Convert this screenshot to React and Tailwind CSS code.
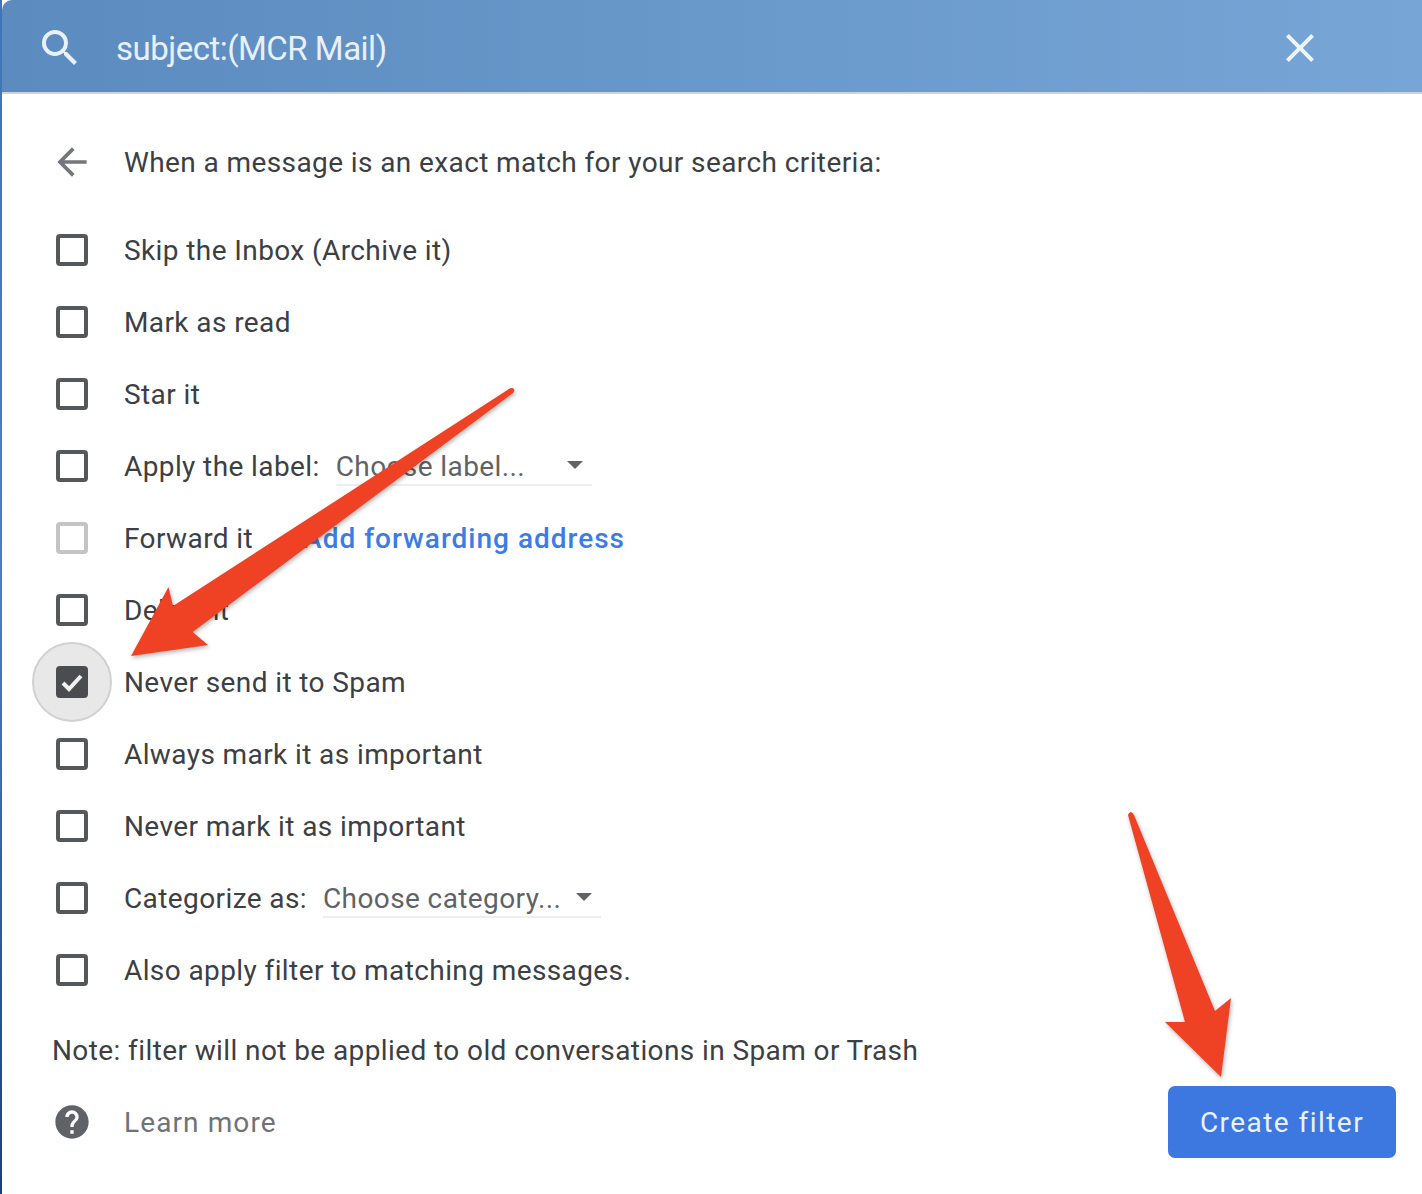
import React from "react";

const rows = [
  { label: "Skip the Inbox (Archive it)" },
  { label: "Mark as read" },
  { label: "Star it" },
  { label: "Apply the label:", select: "label" },
  { label: "Forward it", link: "Add forwarding address", disabled: true },
  { label: "Delete it" },
  { label: "Never send it to Spam", checked: true },
  { label: "Always mark it as important" },
  { label: "Never mark it as important" },
  { label: "Categorize as:", select: "category" },
  { label: "Also apply filter to matching messages." },
];

function Caret() {
  return (
    <svg width="16" height="8" viewBox="0 0 16 8" className="shrink-0">
      <path d="M0 0h16L8 8z" fill="#5f6368" />
    </svg>
  );
}

function CheckBox({ checked, disabled }) {
  if (checked) {
    return (
      <div className="relative h-8 w-8">
        <div className="absolute -left-[24px] -top-[24px] h-[80px] w-[80px] rounded-full border-2 border-[#cfd2d5] bg-[#e8e8e8]" />
        <div className="relative flex h-8 w-8 items-center justify-center rounded-[4px] bg-[#4a4c4f]">
          <svg width="24" height="24" viewBox="0 0 24 24">
            <path d="M3 13l6 6L21 6" fill="none" stroke="#f1f1f1" strokeWidth="4" />
          </svg>
        </div>
      </div>
    );
  }
  return (
    <div
      className={
        disabled
          ? "h-8 w-8 rounded-[4px] border-4 border-[#c4c4c4]"
          : "h-8 w-8 rounded-[4px] border-4 border-[#55585b]"
      }
    />
  );
}

function Row({ row }) {
  return (
    <div className="flex h-[72px] items-center">
      <div className="w-[68px] shrink-0">
        <CheckBox checked={row.checked} disabled={row.disabled} />
      </div>
      <span className="pt-[2px]">{row.label}</span>
      {row.select === "label" && (
        <div className="ml-4 flex h-[40px] w-[256px] items-center border-b-2 border-[#eeeeee] pr-[9px] text-[#5f6368]">
          <span className="flex-1 pt-[4px]">Choose label...</span>
          <Caret />
        </div>
      )}
      {row.select === "category" && (
        <div className="ml-[16px] flex h-[40px] w-[278px] items-center border-b-2 border-[#eeeeee] pr-[9px] text-[#5f6368]">
          <span className="flex-1 pt-[4px]">Choose category...</span>
          <Caret />
        </div>
      )}
      {row.link && (
        <span className="ml-[50px] pt-[2px] font-medium tracking-[1px] text-[#3b7ce6]">{row.link}</span>
      )}
    </div>
  );
}

export default function App() {
  return (
    <div className="relative flex h-[1194px] overflow-hidden bg-white font-['Roboto',sans-serif] text-[28px] tracking-[0.4px] text-[#3c4043]">
      <div className="w-[2px] shrink-0 bg-gradient-to-b from-[#3f74b8] via-[#4a7fc0] to-[#1d3f78]" />
      <div className="flex min-w-0 flex-1 flex-col">
        <div className="flex h-[94px] shrink-0 items-center rounded-tl-[10px] border-b-2 border-[#cfd3d8] bg-gradient-to-r from-[#5b8bbf] to-[#77a5d6] pl-[34px] pr-[98px] pt-1 text-[#e8f0f9]">
          <svg width="48" height="48" viewBox="0 0 24 24" fill="#e8f0f9" className="shrink-0">
            <path d="M15.5 14h-.79l-.28-.27A6.471 6.471 0 0 0 16 9.5 6.5 6.5 0 1 0 9.5 16c1.61 0 3.09-.59 4.23-1.57l.27.28v.79l5 4.99L20.49 19l-4.99-5zm-6 0C7.01 14 5 11.99 5 9.5S7.01 5 9.5 5 14 7.01 14 9.5 11.99 14 9.5 14z" />
          </svg>
          <span className="ml-[32px] flex-1 pt-[2px] text-[33px] tracking-[-0.5px]">subject:(MCR Mail)</span>
          <svg width="48" height="48" viewBox="0 0 24 24" fill="#eef4fb" className="shrink-0">
            <path d="M19 6.41L17.59 5 12 10.59 6.41 5 5 6.41 10.59 12 5 17.59 6.41 19 12 13.41 17.59 19 19 17.59 13.41 12z" />
          </svg>
        </div>

        <div className="flex flex-1 flex-col pl-[54px] pr-[26px] pt-[32px]">
          <div className="mb-4 flex h-[72px] items-center">
            <div className="w-[68px] shrink-0">
              <svg width="44" height="44" viewBox="0 0 24 24" fill="#73777b" className="-ml-[6px]">
                <path d="M20 11H7.83l5.59-5.59L12 4l-8 8 8 8 1.41-1.41L7.83 13H20v-2z" />
              </svg>
            </div>
            <span className="pt-[2px]">When a message is an exact match for your search criteria:</span>
          </div>

          {rows.map((row) => (
            <Row key={row.label} row={row} />
          ))}

          <div className="-ml-1 mt-2 flex h-[72px] items-center pt-[2px]">
            Note: filter will not be applied to old conversations in Spam or Trash
          </div>

          <div className="flex h-[72px] items-center">
            <div className="w-[68px] shrink-0">
              <svg width="40" height="40" viewBox="0 0 24 24" fill="#5f6368" className="-ml-1">
                <path d="M12 2C6.48 2 2 6.48 2 12s4.48 10 10 10 10-4.48 10-10S17.52 2 12 2zm1 17h-2v-2h2v2zm2.07-7.75l-.9.92C13.45 12.9 13 13.5 13 15h-2v-.5c0-1.1.45-2.1 1.17-2.83l1.24-1.26c.37-.36.59-.86.59-1.41 0-1.1-.9-2-2-2s-2 .9-2 2H8c0-2.21 1.79-4 4-4s4 1.79 4 4c0 .88-.36 1.68-.93 2.25z" />
              </svg>
            </div>
            <span className="flex-1 pt-[2px] tracking-[1.1px] text-[#6f7377]">Learn more</span>
            <button className="flex h-[72px] w-[228px] items-center justify-center rounded-[7px] bg-[#3d78e0] pt-[2px] tracking-[1.45px] text-[#eaf1fc]">
              Create filter
            </button>
          </div>
        </div>
      </div>

      {/* annotation arrows on top of the dialog */}
      <svg
        width="1422"
        height="1194"
        viewBox="0 0 1422 1194"
        className="pointer-events-none absolute left-0 top-0 drop-shadow-[1px_2px_2px_rgba(0,0,0,0.3)]"
      >
        <path
          d="M509 389Q512 387 514 389Q515 391 513 393L192.6 632L208 645L131 656L168.5 587L173 606Z"
          fill="#ef4123"
        />
        <path
          d="M1128 815Q1129 812 1131 812Q1133 813 1134 815L1215 1011L1231 998L1221 1077L1165 1022L1185 1022Z"
          fill="#ef4123"
        />
      </svg>
    </div>
  );
}
